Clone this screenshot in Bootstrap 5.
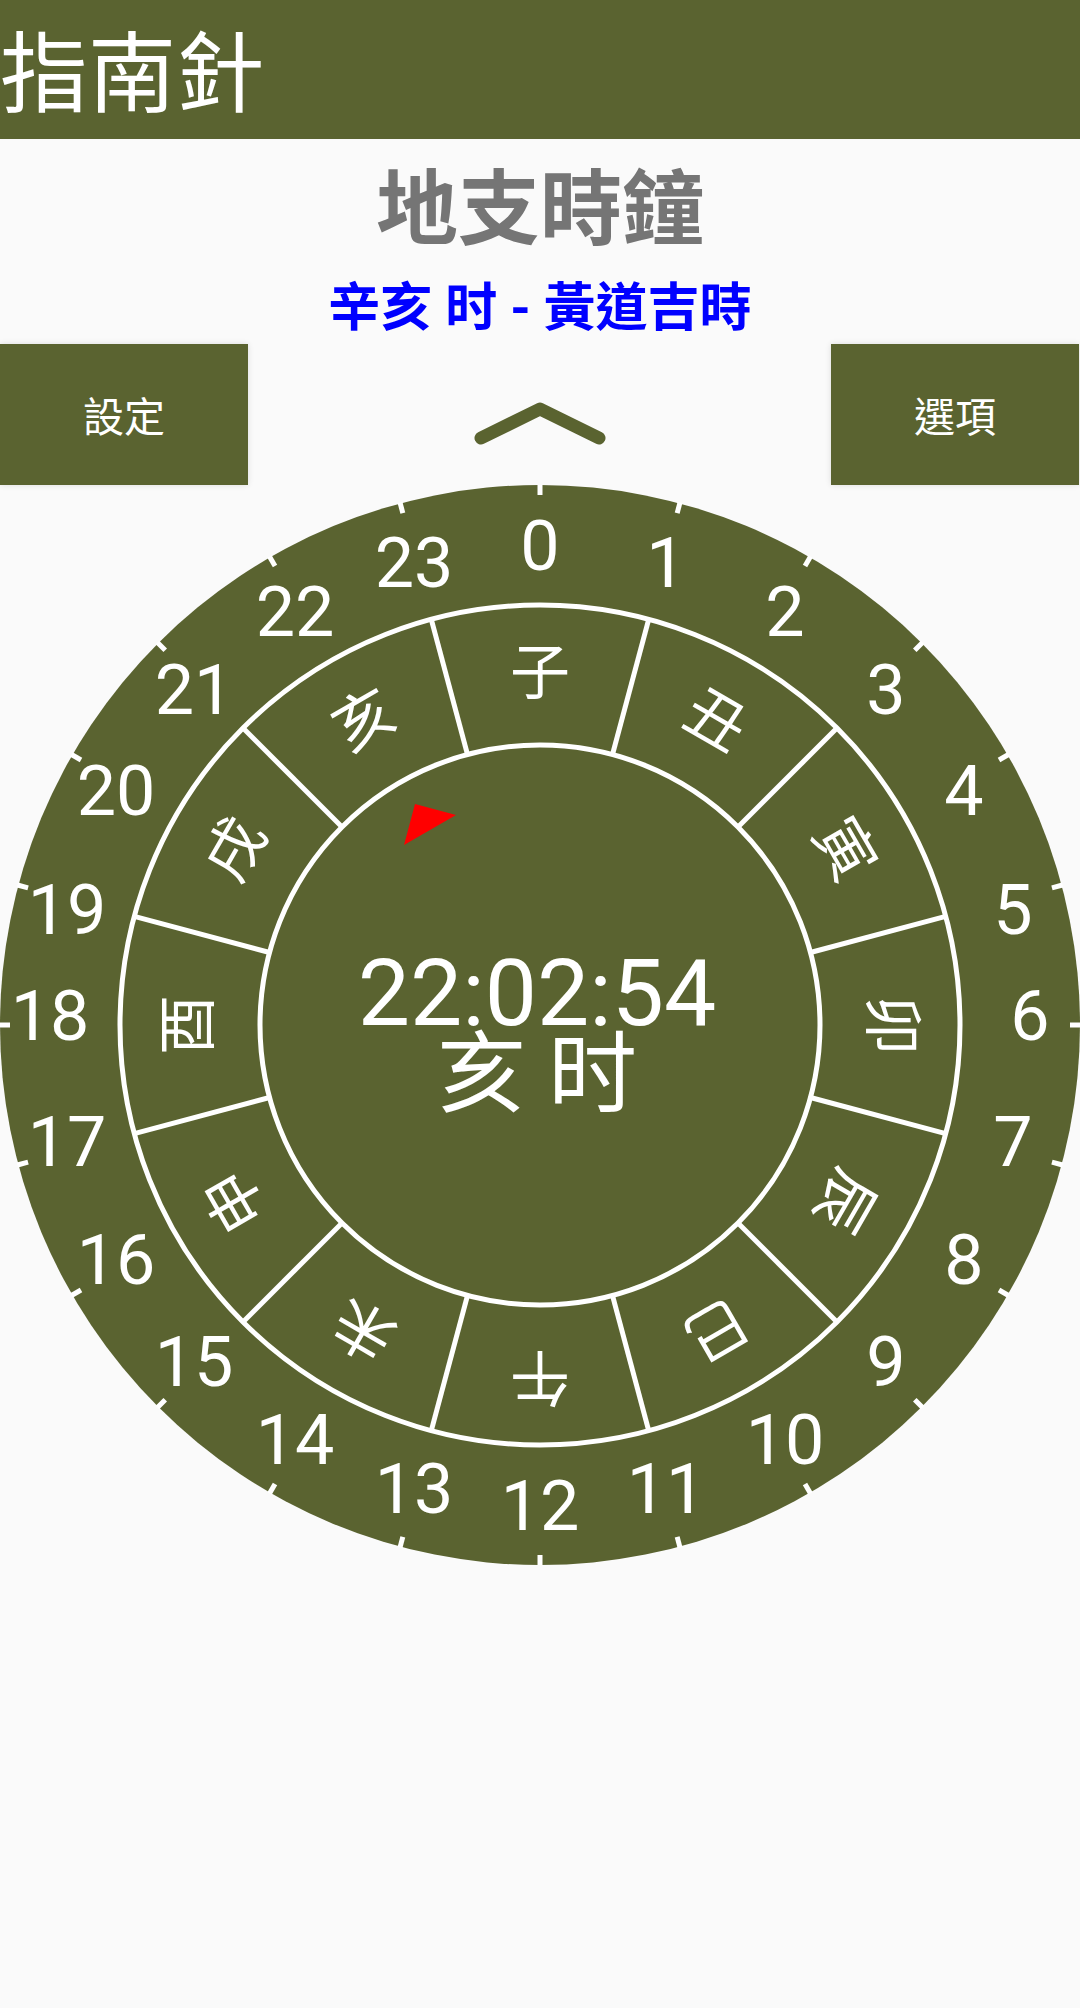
<!DOCTYPE html>
<html lang="zh-Hant">
<head>
<meta charset="utf-8">
<meta name="viewport" content="width=device-width, initial-scale=1">
<title>指南針</title>
<link href="https://cdn.jsdelivr.net/npm/bootstrap@5.3.0/dist/css/bootstrap.min.css" rel="stylesheet">
<style>
  :root { --olive: #5a6330; --paper: #fafafa; }
  body { background: var(--paper); font-family: Roboto, "Noto Sans CJK TC", sans-serif; }
  .app-bar { background: var(--olive); padding-top: 11px; }
  .app-title { font-size: 88px; line-height: 128px; }
  .clock-head { padding-top: 7px; }
  .clock-title { font-size: 82px; line-height: 128px; color: #757575; }
  .clock-hour { font-size: 52px; line-height: 70px; color: #00f; }
  .tool-row { padding-right: 1px; }
  .tool-btn { background: var(--olive); width: 248px; height: 141px; padding: 8px 0 0; font-size: 41px; box-shadow: 0 0 6px rgba(0, 0, 0, .12); }
  .tool-btn:hover, .tool-btn:active { background: #6b7540; }
  .caret-btn { padding: 16px 0 0; }
  .dial { font-family: Roboto, "Noto Sans CJK TC", sans-serif; }
  .dial text { fill: #fff; text-anchor: middle; }
  .dial .lines { fill: none; stroke: #fff; stroke-width: 5; }
  .dial .hours { font-size: 70px; }
  .dial .branches { font-size: 60px; }
  .dial .now { font-size: 93px; }
  .dial .now-branch { font-size: 89px; }
</style>
</head>
<body>
<header class="app-bar text-white">
  <h1 class="app-title fw-normal m-0">指南針</h1>
</header>
<main>
  <div class="clock-head text-center">
    <h2 class="clock-title fw-bold m-0">地支時鐘</h2>
    <p class="clock-hour fw-bold m-0">辛亥 时 - 黃道吉時</p>
  </div>
  <div class="tool-row d-flex justify-content-between align-items-center">
    <button type="button" class="tool-btn btn rounded-0 border-0 text-white">設定</button>
    <button type="button" class="caret-btn btn border-0" aria-label="向上">
      <svg class="d-block" width="132" height="44" viewBox="0 0 132 44" fill="none" stroke="#5a6330" stroke-width="13" stroke-linecap="round" stroke-linejoin="round"><path d="M7 37 66 8l59 29"/></svg>
    </button>
    <button type="button" class="tool-btn btn rounded-0 border-0 text-white">選項</button>
  </div>
  <svg class="dial d-block w-100" viewBox="-540 -540 1080 1080" role="img" aria-label="地支時鐘">
    <circle r="540" fill="#5a6330"/>
    <g class="lines">
      <circle r="420"/>
      <circle r="280"/>
      <path id="tick" d="M0-541V-530"/>
      <use href="#tick" transform="rotate(15)"/><use href="#tick" transform="rotate(30)"/><use href="#tick" transform="rotate(45)"/>
      <use href="#tick" transform="rotate(60)"/><use href="#tick" transform="rotate(75)"/><use href="#tick" transform="rotate(90)"/>
      <use href="#tick" transform="rotate(105)"/><use href="#tick" transform="rotate(120)"/><use href="#tick" transform="rotate(135)"/>
      <use href="#tick" transform="rotate(150)"/><use href="#tick" transform="rotate(165)"/><use href="#tick" transform="rotate(180)"/>
      <use href="#tick" transform="rotate(195)"/><use href="#tick" transform="rotate(210)"/><use href="#tick" transform="rotate(225)"/>
      <use href="#tick" transform="rotate(240)"/><use href="#tick" transform="rotate(255)"/><use href="#tick" transform="rotate(270)"/>
      <use href="#tick" transform="rotate(285)"/><use href="#tick" transform="rotate(300)"/><use href="#tick" transform="rotate(315)"/>
      <use href="#tick" transform="rotate(330)"/><use href="#tick" transform="rotate(345)"/>
      <path id="wall" d="M0-420V-280" transform="rotate(15)"/>
      <use href="#wall" transform="rotate(30)"/><use href="#wall" transform="rotate(60)"/><use href="#wall" transform="rotate(90)"/>
      <use href="#wall" transform="rotate(120)"/><use href="#wall" transform="rotate(150)"/><use href="#wall" transform="rotate(180)"/>
      <use href="#wall" transform="rotate(210)"/><use href="#wall" transform="rotate(240)"/><use href="#wall" transform="rotate(270)"/>
      <use href="#wall" transform="rotate(300)"/><use href="#wall" transform="rotate(330)"/>
    </g>
    <g class="hours">
      <text x="0" y="-455">0</text>
      <text x="126" y="-438">1</text>
      <text x="245" y="-389">2</text>
      <text x="346" y="-311">3</text>
      <text x="424" y="-210">4</text>
      <text x="473" y="-91">5</text>
      <text x="490" y="15">6</text>
      <text x="473" y="141">7</text>
      <text x="424" y="259">8</text>
      <text x="346" y="361">9</text>
      <text x="245" y="439">10</text>
      <text x="126" y="488">11</text>
      <text x="0" y="505">12</text>
      <text x="-126" y="488">13</text>
      <text x="-245" y="439">14</text>
      <text x="-346" y="361">15</text>
      <text x="-424" y="259">16</text>
      <text x="-473" y="141">17</text>
      <text x="-490" y="15">18</text>
      <text x="-473" y="-91">19</text>
      <text x="-424" y="-210">20</text>
      <text x="-346" y="-311">21</text>
      <text x="-245" y="-389">22</text>
      <text x="-126" y="-438">23</text>
    </g>
    <g class="branches">
      <text y="-331">子</text>
      <text y="-331" transform="rotate(30)">丑</text>
      <text y="-331" transform="rotate(60)">寅</text>
      <text y="-331" transform="rotate(90)">卯</text>
      <text y="-331" transform="rotate(120)">辰</text>
      <text y="-331" transform="rotate(150)">巳</text>
      <text y="-331" transform="rotate(180)">午</text>
      <text y="-331" transform="rotate(210)">未</text>
      <text y="-331" transform="rotate(240)">申</text>
      <text y="-331" transform="rotate(270)">酉</text>
      <text y="-331" transform="rotate(300)">戌</text>
      <text y="-331" transform="rotate(330)">亥</text>
    </g>
    <path d="M-125-221-84-210-136-180z" fill="#f00"/>
    <text class="now" x="-3" y="0">22:02:54</text>
    <text class="now-branch" x="-3" y="80">亥 时</text>
  </svg>
</main>
<script src="https://cdn.jsdelivr.net/npm/bootstrap@5.3.0/dist/js/bootstrap.bundle.min.js"></script>
</body>
</html>
